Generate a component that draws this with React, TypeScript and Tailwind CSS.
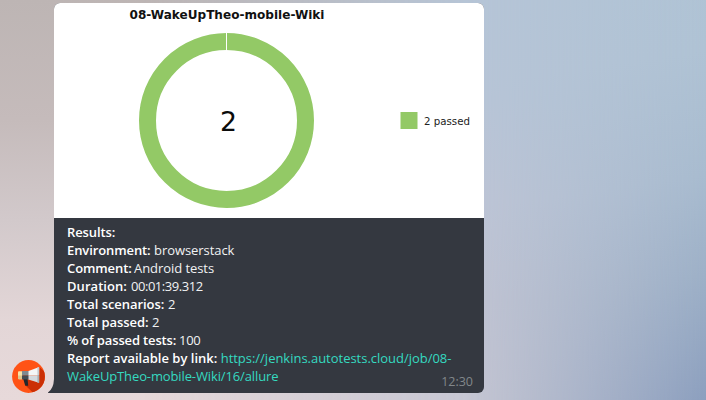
import React from 'react';

type Field = { label: string; value: string; labelClass: string; valueClass: string };

const fields: Field[] = [
  { label: 'Results:', value: '', labelClass: 'w-[48px] tracking-[-0.1px]', valueClass: '' },
  { label: 'Environment:', value: 'browserstack', labelClass: 'w-[87px] tracking-[-0.1px]', valueClass: 'tracking-[-0.06px]' },
  { label: 'Comment:', value: 'Android tests', labelClass: 'w-[67px] tracking-[-0.1px]', valueClass: 'tracking-[-0.06px]' },
  { label: 'Duration:', value: '00:01:39.312', labelClass: 'w-[64px] tracking-[0.05px]', valueClass: 'tracking-[-0.46px]' },
  { label: 'Total scenarios:', value: '2', labelClass: 'w-[101px] tracking-[-0.05px]', valueClass: '' },
  { label: 'Total passed:', value: '2', labelClass: 'w-[85px] tracking-[-0.07px]', valueClass: '' },
  { label: '% of passed tests:', value: '100', labelClass: 'w-[112px] tracking-[-0.15px]', valueClass: 'tracking-[-0.3px]' },
];

function Wallpaper() {
  return (
    <>
      <div className="absolute inset-0 bg-[linear-gradient(180deg,#bdb5b4_0%,#c5bbbb_30%,#d2c9cb_55%,#e3d6d7_80%,#e7d9da_100%)]" />
      <div className="absolute inset-0 bg-[linear-gradient(180deg,#b6c5d7_0%,#b8c5d7_25%,#bec5d6_50%,#c1c4d3_75%,#c5c6d3_100%)] [mask-image:linear-gradient(90deg,transparent_20%,#000_68%)]" />
      <div className="absolute inset-0 bg-[linear-gradient(172deg,#b0c4d6_0%,#afc2d4_30%,#a8bbcf_55%,#9db0c7_75%,#8c9fbe_100%)] [mask-image:linear-gradient(90deg,transparent_66%,#000_100%)]" />
    </>
  );
}

function Avatar() {
  return (
    <svg className="block h-[33px] w-[33px] shrink-0" viewBox="0 0 33 33">
      <defs>
        <clipPath id="avatar-disc">
          <circle cx="16.5" cy="16.5" r="16.4" />
        </clipPath>
      </defs>
      <g clipPath="url(#avatar-disc)">
        <rect width="33" height="33" fill="#ff5316" />
        <path d="M27.5 7 L44 23 L33 44 L14.5 26.5 L12 20 L17 20 L27 22 Z" fill="#cb2f05" />
      </g>
      <path d="M11 18 H15.5 L16.2 25.8 H13.2 Z" fill="#22272c" />
      <rect x="6" y="11.2" width="4.5" height="8" rx="1" fill="#f8e3a6" />
      <path d="M6 15.4 H10.5 V19.2 H7 Q6 19.2 6 18.2 Z" fill="#ddc78e" />
      <path d="M10 11 H17 V15.4 H10 Z" fill="#7f898f" />
      <path d="M10 15.4 H17 V19.4 H10 Z" fill="#424b52" />
      <path d="M16.5 11 L26 7.4 V15.4 H16.5 Z" fill="#f4f6f7" />
      <path d="M16.5 15.4 H26 V22.4 L16.5 19.4 Z" fill="#d3d9de" />
      <rect x="25.4" y="7" width="1.9" height="8.4" rx="0.8" fill="#c6ccd1" />
      <rect x="25.4" y="15" width="1.9" height="8" rx="0.8" fill="#a7afb5" />
    </svg>
  );
}

function DonutChart() {
  return (
    <svg className="block h-[215px] w-[430px]" viewBox="0 0 430 215" fontFamily="'DejaVu Sans', sans-serif">
      <text x="75.5" y="16" fontSize="11.6" fontWeight="700" textLength="195" lengthAdjust="spacingAndGlyphs" fill="#111">
        08-WakeUpTheo-mobile-Wiki
      </text>
      <circle cx="172.5" cy="117.5" r="79" fill="none" stroke="#93c966" strokeWidth="17" />
      <path d="M172.5 29 V48" stroke="#fff" strokeWidth="1" />
      <text x="166" y="127.5" fontSize="26" textLength="17" lengthAdjust="spacingAndGlyphs" fill="#0b0b0b">2</text>
      <rect x="346.5" y="109" width="17" height="17" fill="#93c966" />
      <text x="370" y="122.3" fontSize="9.8" textLength="46" lengthAdjust="spacingAndGlyphs" fill="#222">2 passed</text>
    </svg>
  );
}

export default function App() {
  return (
    <main className="relative h-[400px] w-[706px] overflow-hidden font-['Open_Sans','Noto_Sans',sans-serif]">
      <Wallpaper />
      <div className="relative flex h-[393px] items-end pl-3 pt-[3px]">
        <Avatar />
        <svg className="ml-[3px] block h-[14px] w-[6px] shrink-0" viewBox="0 0 6 14">
          <path d="M6 0 V14 H0 V13.4 Q5.5 10 6 0 Z" fill="#343840" />
        </svg>
        <article className="h-[390px] w-[430px] overflow-hidden rounded-t-[6px] rounded-br-[6px] bg-[#343840]">
          <div className="bg-white">
            <DonutChart />
          </div>
          <div className="flex h-[175px] justify-between pl-[13px] pr-[11px] pt-[5px] text-[13px] leading-[18px] text-[#f1f2f3]">
            <div className="whitespace-nowrap">
              {fields.map(({ label, value, labelClass, valueClass }) => (
                <p key={label} className="flex">
                  <span className={`shrink-0 font-semibold text-white ${labelClass}`}>{label}</span>
                  <span className={valueClass}>{value}</span>
                </p>
              ))}
              <p>
                <span className="font-semibold text-white">Report available by link:</span>{' '}
                <a className="tracking-[-0.02px] text-[#35dac0]">
                  https://jenkins.autotests.cloud/job/08-
                  <br />
                  <span className="tracking-[-0.12px]">WakeUpTheo-mobile-Wiki/16/allure</span>
                </a>
              </p>
            </div>
            <time className="-ml-8 self-end pb-[2px] text-[12.5px] text-[#82878b]">12:30</time>
          </div>
        </article>
      </div>
    </main>
  );
}
